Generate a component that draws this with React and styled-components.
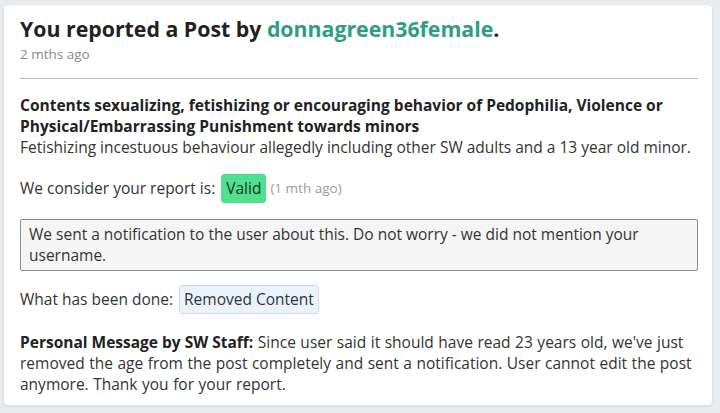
import React from 'react';
import styled, { createGlobalStyle } from 'styled-components';

const GlobalStyle = createGlobalStyle`
  html, body {
    margin: 0;
    padding: 0;
    background: #e8ecef;
  }
  body {
    font-family: 'Open Sans', 'Noto Sans', sans-serif;
    color: #333;
  }
`;

const report = {
  user: 'donnagreen36female',
  when: '2 mths ago',
  category:
    'Contents sexualizing, fetishizing or encouraging behavior of Pedophilia, Violence or Physical/Embarrassing Punishment towards minors',
  details:
    'Fetishizing incestuous behaviour allegedly including other SW adults and a 13 year old minor.',
  verdict: 'Valid',
  verdictWhen: '1 mth ago',
  notice:
    'We sent a notification to the user about this. Do not worry - we did not mention your username.',
  action: 'Removed Content',
  staffMessage:
    "Since user said it should have read 23 years old, we've just removed the age from the post completely and sent a notification. User cannot edit the post anymore. Thank you for your report.",
};

const Page = () => {
  return (
    <>
      <GlobalStyle />
      <Wrapper>
        <Card>
          <Title>
            You reported a Post by <UserLink href="#">{report.user}</UserLink>.
          </Title>
          <Time>{report.when}</Time>
          <Divider />

          <Category>{report.category}</Category>
          <Text>{report.details}</Text>

          <Row>
            <span>We consider your report is:</span>
            <Badge $variant="valid">{report.verdict}</Badge>
            <Muted>({report.verdictWhen})</Muted>
          </Row>

          <Notice>{report.notice}</Notice>

          <Row $tight>
            <span>What has been done:</span>
            <Badge $variant="action">{report.action}</Badge>
          </Row>

          <StaffMessage>
            <strong>Personal Message by SW Staff:</strong> {report.staffMessage}
          </StaffMessage>
        </Card>
      </Wrapper>
    </>
  );
};

const Wrapper = styled.div`
  padding: 4px 7px 7px 3px;
`;

const Card = styled.div`
  box-sizing: border-box;
  width: 710px;
  height: 402px;
  background: #fff;
  border: 1px solid #dfe4e8;
  border-radius: 5px;
  box-shadow: 0 1px 2px rgba(0, 0, 0, 0.08);
  padding: 12px 14px 10px 16px;
  font-size: 15.5px;
  line-height: 21px;
`;

const Title = styled.h2`
  margin: 0;
  font-size: 21.3px;
  line-height: 24px;
  font-weight: 700;
  color: #222;
`;

const UserLink = styled.a`
  color: #2e9e83;
  text-decoration: none;
`;

const Time = styled.div`
  margin-top: 4px;
  font-size: 13.5px;
  line-height: 18px;
  color: #8a8a8a;
`;

const Divider = styled.hr`
  margin: 15px 0 16px;
  border: none;
  border-top: 1px solid #b9b9b9;
`;

const Category = styled.div`
  font-weight: 700;
  color: #222;
`;

const Text = styled.div`
  color: #333;
`;

const Row = styled.div`
  display: flex;
  align-items: center;
  gap: 4px;
  margin-top: ${(p) => (p.$tight ? '14px' : '16px')};
`;

const Badge = styled.span`
  display: inline-block;
  padding: 3px 4px;
  line-height: 21px;
  border-radius: 3px;
  color: ${(p) => (p.$variant === 'valid' ? '#1d3326' : '#333')};
  background: ${(p) => (p.$variant === 'valid' ? '#4fe08f' : '#eaf3fc')};
  border: 1px solid ${(p) => (p.$variant === 'valid' ? '#4fe08f' : '#cddcec')};
  margin-left: 2px;
`;

const Muted = styled.span`
  font-size: 13.5px;
  color: #9a9a9a;
`;

const Notice = styled.div`
  margin-top: 16px;
  padding: 4px 8px;
  background: #f5f5f5;
  border: 1px solid #8c8c8c;
  border-radius: 2px;
`;

const StaffMessage = styled.div`
  margin-top: 18px;
  word-spacing: 0.5px;

  strong {
    color: #222;
    word-spacing: 0;
  }
`;

export default Page;
